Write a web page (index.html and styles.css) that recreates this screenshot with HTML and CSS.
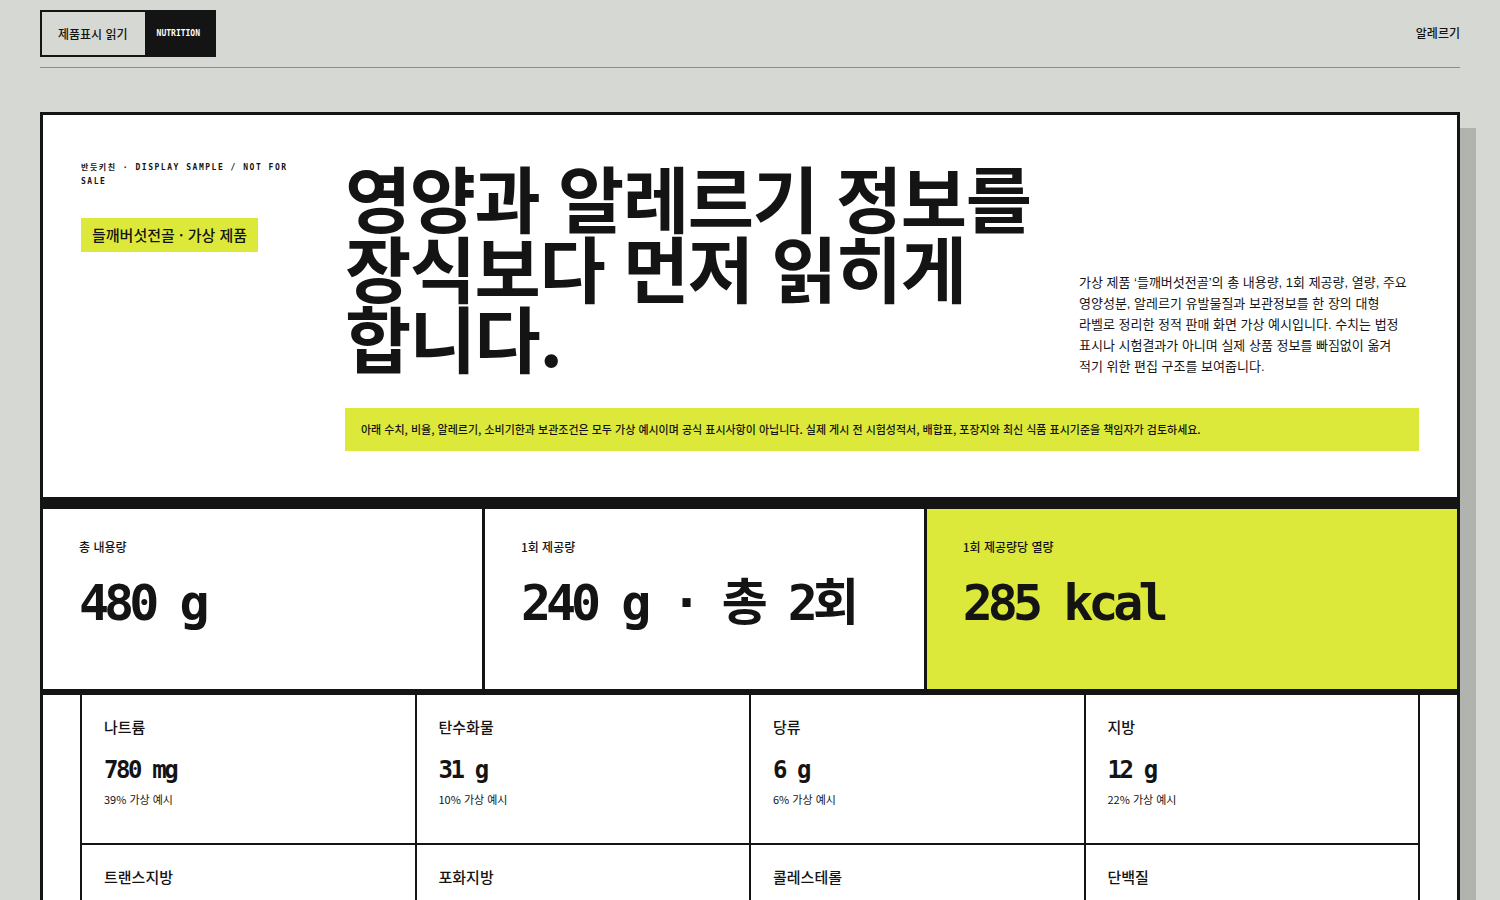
FILE: index.html
```html
<!DOCTYPE html>
<html lang="ko">
<head>
<meta charset="utf-8">
<title>제품표시 읽기</title>
<link rel="stylesheet" href="styles.css">
</head>
<body>
<header class="topbar">
  <div class="brand">
    <span class="brand-name">제품표시 읽기</span>
    <span class="brand-tag">NUTRITION</span>
  </div>
  <nav class="topnav"><a href="#">알레르기</a></nav>
</header>

<main class="label">
  <section class="hero">
    <div class="hero-side">
      <p class="eyebrow">반듯키친 · DISPLAY SAMPLE / NOT FOR SALE</p>
      <span class="product-tag">들깨버섯전골 · 가상 제품</span>
    </div>
    <div class="hero-main">
      <div class="hero-top">
        <h1 class="title">영양과 알레르기 정보를 장식보다 먼저 읽히게 합니다.</h1>
        <p class="desc">가상 제품 ‘들깨버섯전골’의 총 내용량, 1회 제공량, 열량, 주요 영양성분, 알레르기 유발물질과 보관정보를 한 장의 대형 라벨로 정리한 정적 판매 화면 가상 예시입니다. 수치는 법정 표시나 시험결과가 아니며 실제 상품 정보를 빠짐없이 옮겨 적기 위한 편집 구조를 보여줍니다.</p>
      </div>
      <p class="note">아래 수치, 비율, 알레르기, 소비기한과 보관조건은 모두 가상 예시이며 공식 표시사항이 아닙니다. 실제 게시 전 시험성적서, 배합표, 포장지와 최신 식품 표시기준을 책임자가 검토하세요.</p>
    </div>
  </section>

  <section class="stats">
    <div class="stat">
      <p class="stat-label">총 내용량</p>
      <p class="stat-value">480 g</p>
    </div>
    <div class="stat">
      <p class="stat-label">1회 제공량</p>
      <p class="stat-value">240 g · 총 2회</p>
    </div>
    <div class="stat stat-hot">
      <p class="stat-label">1회 제공량당 열량</p>
      <p class="stat-value">285 kcal</p>
    </div>
  </section>

  <section class="nutrients">
    <div class="cell"><p class="n-label">나트륨</p><p class="n-value">780 mg</p><p class="n-pct">39% 가상 예시</p></div>
    <div class="cell"><p class="n-label">탄수화물</p><p class="n-value">31 g</p><p class="n-pct">10% 가상 예시</p></div>
    <div class="cell"><p class="n-label">당류</p><p class="n-value">6 g</p><p class="n-pct">6% 가상 예시</p></div>
    <div class="cell"><p class="n-label">지방</p><p class="n-value">12 g</p><p class="n-pct">22% 가상 예시</p></div>
    <div class="cell"><p class="n-label">트랜스지방</p><p class="n-value">0 g</p><p class="n-pct">가상 예시</p></div>
    <div class="cell"><p class="n-label">포화지방</p><p class="n-value">3.5 g</p><p class="n-pct">23% 가상 예시</p></div>
    <div class="cell"><p class="n-label">콜레스테롤</p><p class="n-value">25 mg</p><p class="n-pct">8% 가상 예시</p></div>
    <div class="cell"><p class="n-label">단백질</p><p class="n-value">16 g</p><p class="n-pct">29% 가상 예시</p></div>
  </section>
</main>
</body>
</html>
```

FILE: styles.css
```css
* { box-sizing: border-box; }

html, body { margin: 0; padding: 0; }

body {
  background: #d6d8d3;
  color: #141414;
  font-family: "Liberation Sans", "Noto Sans CJK KR", sans-serif;
  padding: 10px 40px 60px;
}

p, h1 { margin: 0; }

.topbar {
  display: flex;
  align-items: flex-start;
  justify-content: space-between;
  padding-bottom: 10px;
  border-bottom: 1px solid #8c8d8a;
}

.brand {
  display: flex;
  height: 47px;
  border: 2px solid #141414;
}

.brand-name {
  display: flex;
  align-items: center;
  padding: 0 17px 0 16px;
  font-family: "Noto Sans CJK KR", sans-serif;
  font-size: 12px;
  font-weight: 500;
}

.brand-tag {
  display: flex;
  align-items: center;
  padding: 0 14px 0 12px;
  background: #141414;
  color: #fff;
  font-family: "DejaVu Sans Mono", monospace;
  font-size: 8px;
  font-weight: 700;
}

.topnav { padding-top: 14px; }

.topnav a {
  color: #141414;
  text-decoration: none;
  font-family: "Noto Sans CJK KR", sans-serif;
  font-size: 12px;
  font-weight: 500;
}

.label {
  margin-top: 44px;
  background: #fff;
  border: 3px solid #141414;
  box-shadow: 16px 16px 0 #b1b3ae;
}

.hero {
  display: grid;
  grid-template-columns: 224px minmax(0, 1fr);
  gap: 40px;
  padding: 44px 38px 46px;
  border-bottom: 12px solid #141414;
}

.eyebrow {
  font-family: "DejaVu Sans Mono", "Noto Sans CJK KR", monospace;
  font-size: 8px;
  font-weight: 700;
  line-height: 14px;
  letter-spacing: 0.19em;
  margin-top: 2px;
}

.product-tag {
  display: inline-block;
  margin-top: 29px;
  padding: 7px 11px;
  background: #dde93a;
  font-family: "Noto Sans CJK KR", sans-serif;
  font-size: 15px;
  font-weight: 500;
  line-height: 20px;
}

.hero-main { min-width: 0; }

.hero-top {
  display: flex;
  align-items: flex-end;
  justify-content: space-between;
  gap: 30px;
}

.title {
  flex: 0 0 700px;
  padding-top: 2px;
  font-family: "Noto Sans CJK KR", sans-serif;
  font-size: 72px;
  font-weight: 700;
  line-height: 70px;
  letter-spacing: -0.02em;
  word-break: keep-all;
}

.desc {
  flex: 0 0 340px;
  padding-right: 10px;
  margin-bottom: -6px;
  font-family: "Liberation Sans", "Noto Sans CJK KR", sans-serif;
  font-size: 13px;
  line-height: 21px;
  word-break: keep-all;
}

.note {
  margin-top: 37px;
  padding: 12px 16px;
  background: #dde93a;
  font-family: "Noto Sans CJK KR", sans-serif;
  font-size: 11px;
  font-weight: 500;
  line-height: 19px;
}

.stats {
  display: grid;
  grid-template-columns: 1fr 1fr 1.2fr;
  border-bottom: 6px solid #141414;
}

.stat {
  height: 180px;
  padding: 30px 36px;
  border-right: 3px solid #141414;
}

.stat:last-child { border-right: 0; }

.stat-hot { background: #dde93a; }

.stat-label {
  font-family: "Noto Sans CJK KR", sans-serif;
  font-size: 12px;
  font-weight: 500;
  line-height: 16px;
}

.stat-value {
  margin-top: 18px;
  font-family: "DejaVu Sans Mono", "Noto Sans CJK KR", monospace;
  font-size: 50px;
  font-weight: 700;
  line-height: 60px;
  letter-spacing: -0.1em;
}

.nutrients {
  display: grid;
  grid-template-columns: repeat(4, 1fr);
  margin: 0 37px;
  border-left: 2px solid #141414;
}

.cell {
  height: 150px;
  padding: 21px 22px;
  border-right: 2px solid #141414;
  border-bottom: 2px solid #141414;
}

.n-label {
  font-family: "Noto Sans CJK KR", sans-serif;
  font-size: 15px;
  font-weight: 500;
  line-height: 22px;
}

.n-value {
  margin-top: 17px;
  font-family: "DejaVu Sans Mono", "Noto Sans CJK KR", monospace;
  font-size: 24px;
  font-weight: 700;
  line-height: 30px;
  letter-spacing: -0.1em;
}

.n-pct {
  margin-top: 6px;
  font-family: "Noto Sans CJK KR", sans-serif;
  font-size: 11px;
  line-height: 16px;
}
```
